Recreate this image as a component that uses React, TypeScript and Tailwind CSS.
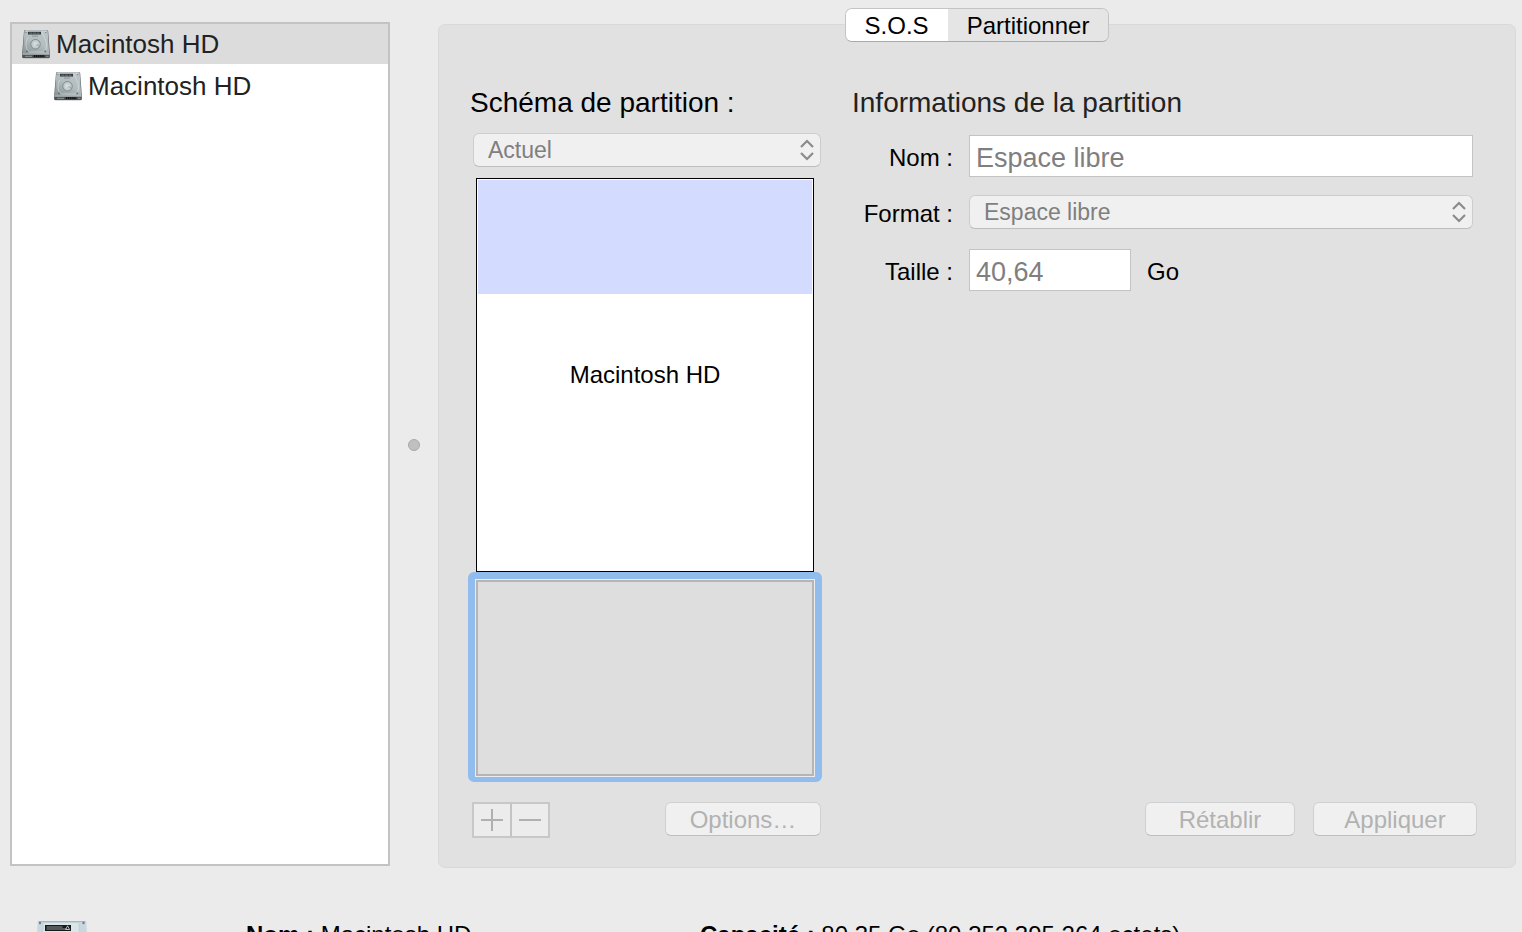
import React, { useState } from "react";

const volumes = [
  { id: "disk", name: "Macintosh HD", child: false },
  { id: "volume", name: "Macintosh HD", child: true },
];

const tabs = ["S.O.S", "Partitionner"];

function DriveIcon() {
  return (
    <svg viewBox="0 0 30 30" className="size-[30px] shrink-0" aria-hidden="true">
      <defs>
        <linearGradient id="driveTop" x1="0.8" y1="0" x2="0.2" y2="1">
          <stop offset="0" stopColor="#bcc6ca" />
          <stop offset="0.5" stopColor="#b3bdc0" />
          <stop offset="1" stopColor="#8c9798" />
        </linearGradient>
        <radialGradient id="driveDisc">
          <stop offset="0" stopColor="#dfe6e8" />
          <stop offset="1" stopColor="#b3bdc0" />
        </radialGradient>
      </defs>
      <path d="M1.5 28.6h27l-.8 1H2.3z" fill="#777" opacity="0.5" />
      <path d="M4 1.2h22.2c.6 0 .9.4 1 1l1.6 21.8v4.2c0 .5-.3.8-.8.8H2c-.5 0-.8-.3-.8-.8V24L3 2.2c0-.6.4-1 1-1z" fill="#5f6769" />
      <path d="M4.2 1.5h21.7c.5 0 .7.3.8.8L28.2 25H1.7L3.4 2.3c0-.5.3-.8.8-.8z" fill="url(#driveTop)" />
      <path d="M4.5 2h21.2" stroke="#dbe1e3" strokeWidth="0.8" />
      <path d="M21 3l3 6.500c2.6 7 1.6 10.500-1.2 13.500H8.500C4.500 20.500 4.200 15 6.500 9" fill="none" stroke="#d9e0e2" strokeWidth="0.8" opacity="0.8" />
      <rect x="7" y="2.8" width="13" height="2.7" fill="#34393b" />
      <path d="M8.4 4.2h10" stroke="#8f979a" strokeWidth="0.7" strokeDasharray="3 0.7" />
      <rect x="11" y="6.6" width="6" height="1" fill="#87949a" />
      <circle cx="14.5" cy="15.2" r="4.8" fill="url(#driveDisc)" stroke="#7f8a8e" strokeWidth="0.9" />
      <path d="M14.5 16h3l1.2 2.5" fill="none" stroke="#8c979b" strokeWidth="0.7" />
      <circle cx="6" cy="22.3" r="0.9" fill="#5f6a6d" />
      <circle cx="24.2" cy="22.3" r="0.9" fill="#5f6a6d" />
      <circle cx="5" cy="3.6" r="0.6" fill="#6b7578" />
      <circle cx="24.8" cy="3.6" r="0.6" fill="#6b7578" />
      <path d="M1.5 25.2h27v2.9c0 .4-.2.6-.6.6H2.1c-.4 0-.6-.2-.6-.6z" fill="#4b5152" />
      <path d="M1.6 25.2h26.8" stroke="#d5dbdd" strokeWidth="0.8" />
      <path d="M4 27.3h7M25 27.3h2.6" stroke="#8e9799" strokeWidth="1" />
      <path d="M12.8 27.1h10.4" stroke="#111" strokeWidth="2.4" strokeDasharray="1.3 0.6" />
    </svg>
  );
}

function LargeDriveIcon() {
  return (
    <svg viewBox="0 0 56 56" className="size-14 shrink-0" aria-hidden="true">
      <path d="M5 1h46c.7 0 1.2.4 1.3 1.2L55 46v8H1v-8L3.7 2.2C3.8 1.4 4.3 1 5 1z" fill="#c9d8de" />
      <path d="M4.6 1.5h46.8" stroke="#a5b9c2" strokeWidth="1" />
      <path d="M9 2.5h36v8l4 5c4 14 2 22-4 29H11C5 37 3 28 6 15l3-5z" fill="#d9e5e9" stroke="#bccbd1" strokeWidth="0.8" />
      <rect x="11" y="5" width="26" height="6" fill="#17191a" />
      <path d="M12.5 7h16M12.5 9h20" stroke="#929899" strokeWidth="1" />
      <path d="M33.6 5.8l2 3.7h-4z" fill="none" stroke="#dde2e3" strokeWidth="0.8" />
      <circle cx="6" cy="3" r="1.2" fill="#6a7f89" />
      <circle cx="49.5" cy="3" r="1.2" fill="#6a7f89" />
      <circle cx="28" cy="28" r="9" fill="#c3d0d5" stroke="#9aabb3" />
      <path d="M1 46h54v8H1z" fill="#525859" />
    </svg>
  );
}

type PopupProps = {
  id: string;
  labelledBy?: string;
  value: string;
};

function Popup({ id, labelledBy, value }: PopupProps) {
  return (
    <div className="relative">
      <select
        id={id}
        aria-labelledby={labelledBy}
        disabled
        className="block h-[34px] w-full appearance-none rounded-[6px] border border-[#cdcdcd] border-b-[#bdbdbd] bg-[#f0f0f0] pl-[14px] text-[23px] leading-8 text-[#7f7f7f] opacity-100"
      >
        <option>{value}</option>
      </select>
      <svg
        viewBox="0 0 14 22"
        className="pointer-events-none absolute top-[6px] right-[7px] h-[22px] w-[14px]"
        fill="none"
        stroke="#8b8b8b"
        strokeWidth="2.2"
        aria-hidden="true"
      >
        <path d="M1 8l6-6 6 6M1 14l6 6 6-6" />
      </svg>
    </div>
  );
}

function PushButton({ children, className }: { children: React.ReactNode; className: string }) {
  return (
    <button
      disabled
      className={`h-[34px] rounded-[6px] border border-[#d0d0d0] border-b-[#bebebe] bg-[#f0f0f0] pt-px text-[24px] leading-8 text-[#b2b2b2] ${className}`}
    >
      {children}
    </button>
  );
}

export function App() {
  const [selected, setSelected] = useState("disk");
  const [activeTab, setActiveTab] = useState("Partitionner");

  return (
    <div className="h-screen overflow-hidden bg-[#ebebeb] font-['Liberation_Sans',Arial,sans-serif] text-black">
      <main className="flex pt-[22px] pr-[6px] pl-[10px]">
        {/* Volumes */}
        <ul className="mb-[2px] flex w-[380px] shrink-0 flex-col gap-[2px] border-2 border-[#c3c3c3] bg-white">
          {volumes.map((volume) => (
            <li key={volume.id}>
              <button
                onClick={() => setSelected(volume.id)}
                className={`flex h-10 w-full items-center gap-[5px] text-[26px] leading-8 text-[#222] ${
                  volume.child ? "pl-[41px]" : "pl-[9px]"
                } ${selected === volume.id ? "bg-[#dcdcdc]" : ""}`}
              >
                <DriveIcon />
                {volume.name}
              </button>
            </li>
          ))}
        </ul>

        {/* Splitter */}
        <div className="flex w-12 shrink-0 cursor-col-resize items-center justify-center">
          <span className="size-3 rounded-full border border-[#a9a9a9] bg-[#c0c0c0]" />
        </div>

        <section className="mt-[2px] min-w-0 flex-1 rounded-[7px] border border-[#d9d9d9] bg-[#e1e1e1] pb-[29px]">
          <div className="-mt-[17px] flex justify-center">
            <div role="tablist" className="flex h-[34px] overflow-hidden rounded-[7px] border border-[#c4c4c4] border-b-[#a9a9a9]">
              {tabs.map((tab) => (
                <button
                  key={tab}
                  role="tab"
                  aria-selected={activeTab === tab}
                  onClick={() => setActiveTab(tab)}
                  className={`px-[19px] pt-px text-[24px] leading-8 ${activeTab === tab ? "bg-[#e5e5e5]" : "bg-white"}`}
                >
                  {tab}
                </button>
              ))}
            </div>
          </div>

          <div className="mt-[45px] flex gap-[30px] pr-[38px] pl-[29px]">
            <div className="w-[354px] shrink-0">
              <h2 id="scheme" className="pl-[2px] text-[28px] leading-8">
                Schéma de partition :
              </h2>
              <div className="mt-[14px] pr-px pl-[5px]">
                <Popup id="scheme-select" labelledBy="scheme" value="Actuel" />
              </div>

              <div className="relative mx-2 mt-[11px] flex h-[394px] items-center justify-center border border-black bg-white">
                <div className="absolute inset-x-px top-px h-[114px] bg-[#d3dcff]" />
                <span className="relative text-[24px] leading-8">Macintosh HD</span>
              </div>
              <div className="h-[210px] rounded-[6px] border-x-[7px] border-t-[7px] border-b-[5px] border-[#91bdee] bg-[#ececec] p-px">
                <div className="h-full border-2 border-[#b5b5b5] bg-[#dedede]" />
              </div>

              <div className="mt-5 flex h-9 items-start justify-between pr-px pl-1">
                <div className="flex h-9 border-2 border-[#c8c8c8] bg-[#ececec]">
                  <button disabled aria-label="Ajouter" className="flex w-[38px] items-center justify-center border-r-2 border-[#c3c3c3]">
                    <svg viewBox="0 0 22 22" className="size-[22px]" stroke="#b0b0b0" strokeWidth="2">
                      <path d="M0 11h22M11 0v22" />
                    </svg>
                  </button>
                  <button disabled aria-label="Supprimer" className="flex w-9 items-center justify-center">
                    <svg viewBox="0 0 22 22" className="size-[22px]" stroke="#b0b0b0" strokeWidth="2">
                      <path d="M0 11h22" />
                    </svg>
                  </button>
                </div>
                <PushButton className="w-[156px]">Options…</PushButton>
              </div>
            </div>

            <div className="flex min-w-0 flex-1 flex-col">
              <h2 className="text-[28px] leading-8 text-[#222]">Informations de la partition</h2>
              <div className="mt-4 grid grid-cols-[101px_1fr] items-center gap-x-4 pr-1 text-[24px] leading-[30px]">
                <label htmlFor="name" className="pt-[3px] text-right">
                  Nom :
                </label>
                <input
                  id="name"
                  disabled
                  defaultValue="Espace libre"
                  className="h-[42px] w-full border border-[#c3c3c3] bg-white px-[6px] pt-[5px] text-[27px] leading-8 text-[#7f7f7f]"
                />

                <label htmlFor="format" className="mt-[18px] pt-[3px] text-right">
                  Format :
                </label>
                <div className="mt-[18px]">
                  <Popup id="format" value="Espace libre" />
                </div>

                <label htmlFor="size" className="mt-5 pt-[3px] text-right">
                  Taille :
                </label>
                <div className="mt-5 flex items-center gap-4">
                  <input
                    id="size"
                    disabled
                    defaultValue="40,64"
                    className="h-[42px] w-[162px] border border-[#c3c3c3] bg-white px-[6px] pt-[5px] text-[27px] leading-8 text-[#7f7f7f]"
                  />
                  <span className="pt-[3px]">Go</span>
                </div>
              </div>

              <div className="mt-auto flex h-9 items-start justify-end gap-[18px]">
                <PushButton className="w-[150px]">Rétablir</PushButton>
                <PushButton className="w-[164px]">Appliquer</PushButton>
              </div>
            </div>
          </div>
        </section>
      </main>

      {/* Infos du disque */}
      <footer className="mt-[52px] flex pl-[34px] text-[24px] leading-[30px]">
        <LargeDriveIcon />
        <p className="ml-[156px] w-[454px]">
          <b>Nom :</b> Macintosh HD
        </p>
        <p>
          <b>Capacité :</b> 80,35 Go (80 352 395 264 octets)
        </p>
      </footer>
    </div>
  );
}

export default App;
